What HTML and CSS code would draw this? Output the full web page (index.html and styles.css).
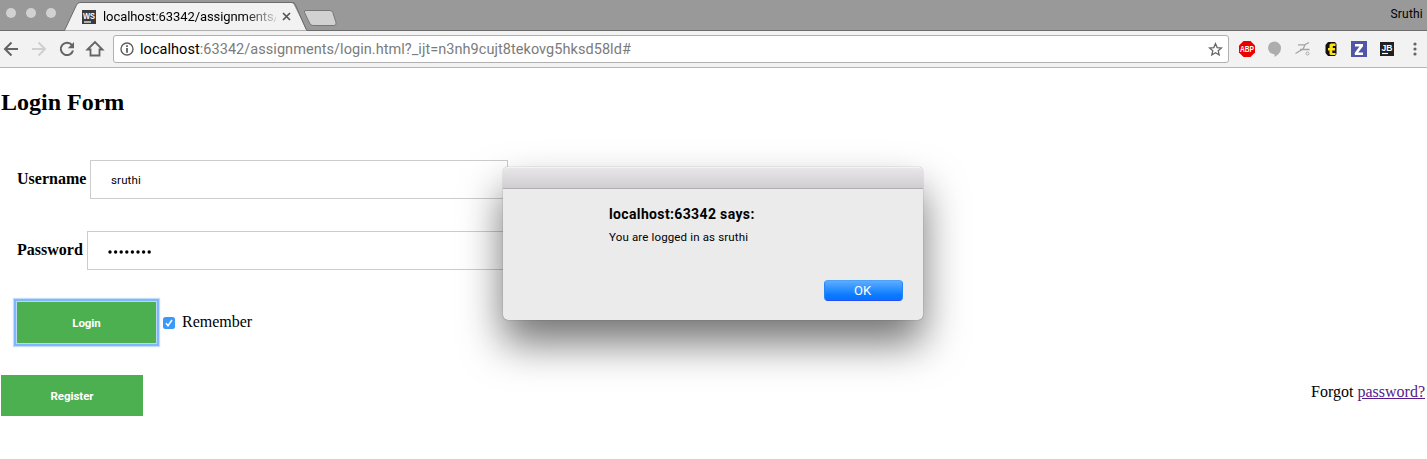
FILE: index.html
```html
<!DOCTYPE html>
<html lang="en">
<head>
<meta charset="utf-8">
<title>Login Form</title>
<link rel="stylesheet" href="styles.css">
</head>
<body>
<header class="browser">
  <div class="tabstrip">
    <svg class="tab-shapes" width="350" height="31" viewBox="0 0 350 31">
      <path d="M0 30.5H64.5L76.5 5Q77.700 2.500 80 2.500H292Q294.500 2.500 295.500 5L307 30.500H350" fill="#f2f2f2" stroke="#6c6c6c"/>
      <path d="M308 30H350V31H308Z" fill="#6c6c6c"/>
      <path d="M308 3H350V30H308Z" fill="#999"/>
      <path d="M293 3L306.500 30H350V3Z" fill="#999"/>
      <path d="M292 2.500Q294.500 2.500 295.500 5L306 29Q306.600 30.500 308 30.500H350" fill="none" stroke="#6c6c6c"/>
      <path d="M306 10.500H330Q332 10.500 332.800 12.500L336 22.500Q336.700 25.500 334 25.500H313Q310.500 25.500 309.500 23L304.500 12.500Q304 10.500 306 10.500Z" fill="#d1d1d1" stroke="#777"/>
    </svg>
    <div class="lights"><i></i><i></i><i></i></div>
    <svg class="favicon" width="14" height="14" viewBox="0 0 14 14"><rect width="14" height="14" fill="#3b3b3b"/><text x="1" y="9" font-size="9.500" textLength="12" lengthAdjust="spacingAndGlyphs" class="logo-text">WS</text><path d="M2 12h7" stroke="#fff" stroke-width="1.200"/></svg>
    <span class="tab-title">localhost:63342/assignments/</span>
    <svg class="tab-close" width="9" height="9" viewBox="0 0 9 9"><path d="M1 1L8 8M8 1L1 8" stroke="#555" stroke-width="1.700"/></svg>
    <span class="profile">Sruthi</span>
  </div>
  <div class="toolbar">
    <svg class="nav" width="112" height="36" viewBox="0 31 112 36" fill="none" stroke-width="2">
      <path d="M18 49H5.500M11.500 42.500L5 49L11.500 55.500" stroke="#646464"/>
      <path d="M32 49H44.500M38.500 42.500L45 49L38.500 55.500" stroke="#cfcfcf"/>
      <path d="M72 45.200A6.200 6.200 0 1 0 73 50.500" stroke="#646464"/>
      <path d="M74 42V48.200H67.800Z" fill="#646464"/>
      <path d="M87.500 49.500L95 42L102.500 49.500H99.500V55.500H90.500V49.500Z" stroke="#646464" stroke-width="1.800"/>
    </svg>
    <div class="omnibox">
      <svg class="info" width="14" height="14" viewBox="0 0 14 14"><circle cx="7" cy="7" r="6" fill="none" stroke="#5e5e5e" stroke-width="1.400"/><path d="M7 3.200v1.700M7 6v4.800" stroke="#5e5e5e" stroke-width="1.800"/></svg>
      <span class="url"><b>localhost</b>:63342/assignments/login.html?_ijt=n3nh9cujt8tekovg5hksd58ld#</span>
      <svg class="star" width="15" height="15" viewBox="0 0 15 15"><path d="M7.500 1.700L9.200 5.600L13.500 6L10.200 8.800L11.200 13L7.500 10.800L3.800 13L4.800 8.800L1.500 6L5.800 5.600Z" fill="none" stroke="#666" stroke-width="1.300"/></svg>
    </div>
    <svg class="extensions" width="198" height="36" viewBox="1229 31 198 36">
      <path d="M1243.500 41H1250.500L1255 45.500V52.500L1250.500 57H1243.500L1239 52.500V45.500Z" fill="#eb0000"/>
      <text x="1240" y="52.200" font-size="9.500" textLength="14" lengthAdjust="spacingAndGlyphs" class="logo-text">ABP</text>
      <path d="M1274.500 41.500A6.500 6.400 0 1 0 1274.500 54.300V57Q1281 53.500 1281 48A6.500 6.500 0 0 0 1274.500 41.500Z" fill="#adadad"/>
      <path d="M1298 44.800H1304.500L1309 42.500M1305 45L1303 49L1295.500 53.500M1300 49.500H1309.500" fill="none" stroke="#a3a3a3" stroke-width="1.300"/>
      <circle cx="1307.500" cy="53.500" r="1.500" fill="none" stroke="#aaa"/>
      <path d="M1328 42H1335L1336.500 44V54L1335 56H1328L1325.500 53V45Z" fill="#111"/>
      <path d="M1331 43.500H1335.500V46H1332.800V48H1335V50.500H1332.300V53H1335.500V55H1330.500L1329.500 54V50.500H1328V48H1329.500V44.500Z" fill="#ffe11a"/>
      <rect x="1351" y="41" width="16" height="16" fill="#5055a8"/>
      <path d="M1355 44H1363V46.200L1358.200 52.500H1363V55H1354.800V52.700L1359.500 46.500H1355Z" fill="#fff"/>
      <rect x="1380" y="42" width="14" height="14" fill="#202020"/>
      <text x="1381.500" y="50.500" font-size="9.500" textLength="11" lengthAdjust="spacingAndGlyphs" class="logo-text">JB</text><path d="M1382 53.500H1388" stroke="#fff" stroke-width="1.200"/>
      <g fill="#646464"><circle cx="1415" cy="44" r="1.600"/><circle cx="1415" cy="49" r="1.600"/><circle cx="1415" cy="54" r="1.600"/></g>
    </svg>
  </div>
</header>
<main class="page">
  <h2 class="heading">Login Form</h2>
  <form class="form">
    <div class="row"><label class="label-user" for="user">Username</label><input class="field" id="user" type="text" value="sruthi"></div>
    <div class="row"><label class="label-pass">Password</label><div class="field dots"><svg width="44" height="5" viewBox="0 0 44 5"><g fill="#000"><circle cx="2" cy="2" r="1.700"/><circle cx="7.600" cy="2" r="1.700"/><circle cx="13.200" cy="2" r="1.700"/><circle cx="18.800" cy="2" r="1.700"/><circle cx="24.400" cy="2" r="1.700"/><circle cx="30" cy="2" r="1.700"/><circle cx="35.600" cy="2" r="1.700"/><circle cx="41.200" cy="2" r="1.700"/></g></svg></div></div>
    <div class="row actions">
      <button class="button login" type="button"><span>Login</span></button>
      <svg class="check" width="12" height="12" viewBox="0 0 12 12"><rect width="12" height="12" rx="2.500" fill="#3b99fc"/><path d="M3 6.300L5 8.800L9 3" fill="none" stroke="#fff" stroke-width="1.500"/></svg>
      <span class="remember">Remember</span>
    </div>
  </form>
  <footer class="foot">
    <button class="button register" type="button"><span>Register</span></button>
    <p class="forgot">Forgot <a href="#">password?</a></p>
  </footer>
</main>
<section class="dialog" role="dialog">
  <div class="dialog-bar"></div>
  <div class="dialog-body">
    <h3><span>localhost:63342 says:</span></h3>
    <p><span>You are logged in as sruthi</span></p>
    <button class="ok" type="button">OK</button>
  </div>
</section>
</body>
</html>
```
FILE: styles.css
```css
* { box-sizing: border-box; }
body { margin: 0; width: 1427px; height: 459px; overflow: hidden; background: #fff; color: #000; font-family: "Liberation Serif", serif; font-size: 16px; }
svg { display: block; flex: none; }
.browser { font-family: Roboto, sans-serif; }
.logo-text { font-family: "Liberation Sans", sans-serif; font-weight: 700; fill: #fff; }
.tabstrip { position: relative; display: flex; align-items: center; height: 31px; background: #999; border-bottom: 1px solid #6c6c6c; }
.tab-shapes { position: absolute; left: 0; top: 0; }
.tabstrip > :not(.tab-shapes) { position: relative; }
.lights { display: flex; gap: 10px; margin: -4px 26px 0 6px; }
.lights i { width: 10px; height: 10px; border-radius: 50%; background: #d1d1d1; }
.favicon { margin-top: 4px; }
.tab-title { width: 173px; margin: 3px 0 0 7px; white-space: nowrap; font-size: 13px; line-height: 18px; letter-spacing: -0.080px; -webkit-mask-image: linear-gradient(90deg, #000 140px, transparent 178px); mask-image: linear-gradient(90deg, #000 140px, transparent 178px); }
.tab-close { margin: 3px 0 0 6px; }
.profile { margin: -3px 4px 0 auto; font-size: 12px; letter-spacing: 0.200px; }
.toolbar { display: flex; height: 37px; background: #f2f2f2; border-bottom: 1px solid #b5b5b5; }
.nav { margin-right: 1px; }
.omnibox { display: flex; align-items: center; width: 1116px; height: 28px; margin-top: 4px; padding: 0 5px 0 6px; border: 1px solid #b0b0b0; border-radius: 3px; background: #fff; }
.url { margin: 1px 0 0 6px; white-space: nowrap; color: #7b7b7b; font-size: 14.500px; line-height: 20px; letter-spacing: 0.050px; }
.url b { color: #000; font-weight: 400; }
.star { margin-left: auto; }
.page { padding: 20px 2px 0 1px; }
.heading { margin: 0; font-size: 24px; line-height: 28px; }
.form { display: flex; flex-direction: column; gap: 32px; padding: 44px 16px 0; }
.row { display: flex; align-items: center; height: 39px; font-weight: 700; }
.row label, .remember { padding-bottom: 2px; }
.label-user { width: 73px; }
.label-pass { width: 70px; }
.field { width: 418px; height: 39px; padding: 1px 20px 0; border: 1px solid #ccc; background: #fff; color: #000; font: 11.500px Roboto, sans-serif; letter-spacing: 0.150px; }
.dots { display: flex; align-items: center; padding-top: 3px; }
.actions { height: 41px; font-weight: 400; }
.button { padding: 1px 0 0; border: 0; background: #4caf50; color: #fff; font: 700 11.500px Roboto, sans-serif; letter-spacing: -0.050px; height: 41px; }
.login { width: 139px; box-shadow: 0 0 0 1px #b9d7f8, 0 0 0 3px #7fb7fa, 0 0 1px 4px #c4ddfa; }
.check { margin: 1px 7px 0; }
.foot { display: flex; justify-content: space-between; padding-top: 32px; }
.register { width: 142px; }
.forgot { margin: 8px 0 0; line-height: 18px; }
.forgot a { color: #551a8b; }
.dialog { position: absolute; left: 503px; top: 167px; width: 420px; height: 153px; border-radius: 5px; background: #ebebeb; box-shadow: 0 0 1px rgba(0,0,0,.6), 0 23px 42px rgba(0,0,0,.55); font-family: Roboto, sans-serif; }
.dialog-bar { height: 22px; border-radius: 5px 5px 0 0; border-top: 1px solid #f5f4f5; border-bottom: 1px solid #b1afb1; background: linear-gradient(#e8e6e8, #d0ced0); }
.dialog-body { display: flex; flex-direction: column; padding: 16px 20px 0 106px; }
.dialog h3 { margin: 0; font-size: 14px; line-height: 18px; letter-spacing: 0.360px; }
.dialog p { margin: 6px 0 0; font-size: 11.500px; line-height: 16px; letter-spacing: 0.150px; }
.ok { align-self: flex-end; width: 79px; height: 21px; margin-top: 35px; padding: 0 2px 0 0; border: 1px solid #2784fa; border-top-color: #4ba2f8; border-bottom-color: #2450f5; border-radius: 4px; background: linear-gradient(#5badff, #0a7aff 75%, #0870ff); color: #fff; font: 13px Roboto, sans-serif; }
```
